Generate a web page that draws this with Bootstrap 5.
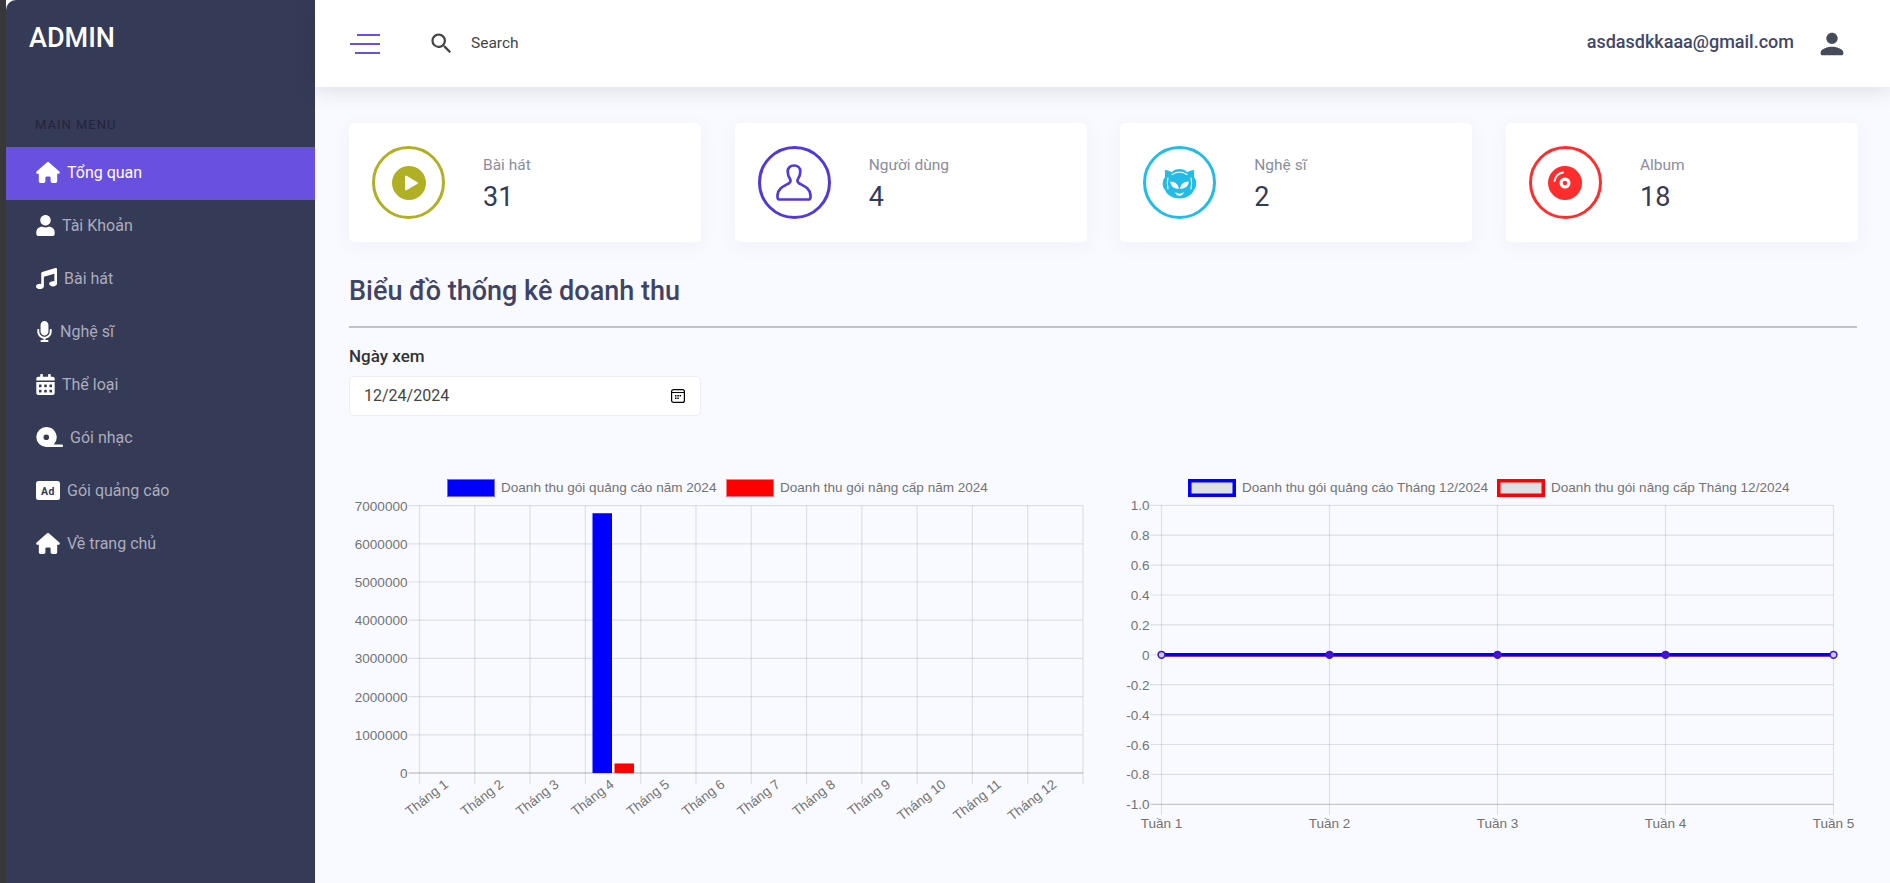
<!DOCTYPE html>
<html lang="en">
<head>
  <meta charset="UTF-8" />
  <meta name="viewport" content="width=device-width, initial-scale=1" />
  <title>Admin</title>
  <link href="https://cdn.jsdelivr.net/npm/bootstrap@5.3.0/dist/css/bootstrap.min.css" rel="stylesheet" />
  <style>
    body { font-family: Roboto, "Liberation Sans", sans-serif; background: #f9faff; color: #333; overflow: hidden; }
    .page-strip { width: 6px; background: #383838; flex: none; }
    .side-panel { width: 309px; flex: none; background: #353a56; border-top-left-radius: 10px; }
    .side-logo { height: 87px; padding: 23px 0 0 23px; color: #fff; font-size: 27px; font-weight: 500; line-height: 30px; }
    .side-title { height: 60px; padding: 30px 0 0 29px; font-size: 13px; line-height: 16px; letter-spacing: 1px; color: #22253a; }
    .side-link { height: 53px; padding: 0 0 2px 30px; gap: 7px; font-size: 16px; color: #abadbd; }
    .side-link svg { fill: #fff; flex: none; }
    .side-link.active-item { background: #6950df; color: #fff; }
    .top-bar { height: 87px; background: #fff; box-shadow: 0 4px 20px rgba(40, 40, 70, .13); padding: 0 41px 0 35px; position: relative; }
    .menu-lines { width: 30px; gap: 7px; margin-right: 48px; }
    .menu-lines span { display: block; height: 2px; background: #6950df; }
    .menu-lines span:nth-child(1) { width: 23px; }
    .menu-lines span:nth-child(2) { width: 30px; }
    .menu-lines span:nth-child(3) { width: 25px; }
    .search-box { border: 0; outline: 0; margin-left: 14px; width: 200px; font-size: 15.5px; color: #444; }
    .search-box::placeholder { color: #444; opacity: 1; }
    .user-mail { font-size: 18px; font-weight: 500; line-height: 22px; margin: 0 21px 3px 0; color: #43476a; }
    .body-area { padding: 36px 33px 0 34px; }
    .stat-row { display: grid; grid-template-columns: repeat(4, 352px); justify-content: space-between; margin-right: -1px; }
    .stat-box { height: 119px; border: 0; border-radius: 5px; padding: 0 23px; box-shadow: 0 4px 20px rgba(70, 70, 140, .05); }
    .stat-ring { width: 73px; height: 73px; border: 3.5px solid; border-radius: 50%; margin-right: 38px; flex: none; }
    .ring-play { border-color: #b1b024; }
    .ring-user { border-color: #5139dc; }
    .ring-artist { border-color: #22bce6; }
    .ring-album { border-color: #ff2d2d; }
    .stat-text { padding-top: 3px; }
    .stat-name { font-size: 15.5px; line-height: 20px; color: #8c8d9c; }
    .stat-num { font-size: 27px; line-height: 34px; margin-top: 5px; color: #353a56; }
    .chart-head { font-size: 27px; font-weight: 500; color: #3f4466; margin: 33px 0 0; line-height: 32px; }
    .chart-rule { height: 2px; background: #bfc0c8; margin: 19px 0 15px; opacity: 1; border: 0; }
    .date-label { font-size: 17px; font-weight: 500; color: #333; line-height: 26px; margin-bottom: 7px; }
    .date-field { width: 352px; height: 40px; border: 1px solid #eceef3; border-radius: 5px; font-size: 16px; color: #444; padding: 0 14px; }
    .date-field::-webkit-calendar-picker-indicator {
      width: 14px; height: 14px; padding: 0; margin-right: 1px;
      background: url("data:image/svg+xml,%3Csvg xmlns='http://www.w3.org/2000/svg' viewBox='0 0 14 14'%3E%3Crect x='.6' y='.6' width='12.800' height='12.800' rx='2' fill='none' stroke='%23000' stroke-width='1.200'/%3E%3Cpath d='M1 3.500h12' stroke='%23000' stroke-width='1.200'/%3E%3Cpath d='M4 6h1.500v1.500H4zM6.300 6h1.500v1.500H6.300zM8.600 6h1.500v1.500H8.600zM4 8.500h1.500V10H4zM6.300 8.500h1.500V10H6.300z'/%3E%3C/svg%3E") no-repeat center / 14px 14px;
    }
    .chart-row { display: grid; grid-template-columns: 750px 750px; column-gap: 8px; margin-top: 54px; }
    .chart-row svg { display: block; }
    .chart-row text { font-family: "Liberation Sans", Arial, sans-serif; font-size: 13.55px; fill: #737373; }
  </style>
</head>
<body>
  <div class="d-flex vh-100">
    <div class="page-strip"></div>

    <!-- Sidebar -->
    <aside class="side-panel">
      <div class="side-logo">ADMIN</div>
      <div class="side-title">MAIN MENU</div>
      <nav class="nav flex-column">
        <a class="nav-link d-flex align-items-center side-link active-item" href="#">
          <svg width="24" height="21" viewBox="0 0 576 512"><path d="M575.8 255.5c0 18-15 32.1-32 32.1h-32l.7 160.2c0 2.7-.2 5.4-.5 8.1V472c0 22.1-17.9 40-40 40H456c-1.100 0-2.200 0-3.300-.1-1.400.1-2.800.1-4.200.1H392c-22.100 0-40-17.900-40-40V384c0-17.700-14.300-32-32-32H256c-17.700 0-32 14.300-32 32v88c0 22.100-17.900 40-40 40H128.100c-1.500 0-3-.1-4.500-.2-1.200.1-2.400.2-3.600.2H104c-22.100 0-40-17.900-40-40V360c0-.9 0-1.900.1-2.800V287.600H32c-18 0-32-14-32-32.100 0-9 3-17 10-24L266.400 8c7-7 15-8 22-8s15 2 21 7L564.800 231.500c8 7 12 15 11 24z"/></svg>
          Tổng quan</a>
        <a class="nav-link d-flex align-items-center side-link" href="#">
          <svg width="19" height="21" viewBox="0 0 448 512"><path d="M224 256c70.7 0 128-57.3 128-128S294.7 0 224 0 96 57.3 96 128s57.3 128 128 128zm89.6 32h-16.7c-22.2 10.2-46.9 16-72.9 16s-50.6-5.8-72.9-16h-16.7C60.2 288 0 348.2 0 422.4V464c0 26.5 21.5 48 48 48h352c26.5 0 48-21.5 48-48v-41.6c0-74.2-60.2-134.4-134.4-134.4z"/></svg>
          Tài Khoản</a>
        <a class="nav-link d-flex align-items-center side-link" href="#">
          <svg width="21" height="21" viewBox="0 0 512 512"><path d="M470.38 1.51L150.41 96A32 32 0 0 0 128 126.51v261.41A139 139 0 0 0 96 384c-53 0-96 28.66-96 64s43 64 96 64 96-28.66 96-64V214.32l256-75v184.61a138.4 138.4 0 0 0-32-3.93c-53 0-96 28.66-96 64s43 64 96 64 96-28.65 96-64V32a32 32 0 0 0-41.62-30.49z"/></svg>
          Bài hát</a>
        <a class="nav-link d-flex align-items-center side-link" href="#">
          <svg width="17" height="21" viewBox="0 0 352 512"><path d="M176 352c53.02 0 96-42.98 96-96V96c0-53.02-42.98-96-96-96S80 42.98 80 96v160c0 53.02 42.98 96 96 96zm160-160h-16c-8.84 0-16 7.16-16 16v48c0 74.8-64.49 134.82-140.79 127.38C96.71 376.89 48 317.11 48 250.3V208c0-8.84-7.16-16-16-16H16c-8.84 0-16 7.16-16 16v40.16c0 89.64 63.97 169.55 152 181.69V464H96c-8.84 0-16 7.16-16 16v16c0 8.84 7.16 16 16 16h160c8.84 0 16-7.16 16-16v-16c0-8.84-7.16-16-16-16h-56v-33.77C285.71 418.47 352 344.9 352 256v-48c0-8.84-7.16-16-16-16z"/></svg>
          Nghệ sĩ</a>
        <a class="nav-link d-flex align-items-center side-link" href="#">
          <svg width="19" height="21" viewBox="0 0 448 512"><path d="M0 464c0 26.5 21.5 48 48 48h352c26.5 0 48-21.5 48-48V192H0v272zm320-196c0-6.6 5.4-12 12-12h40c6.6 0 12 5.4 12 12v40c0 6.6-5.4 12-12 12h-40c-6.6 0-12-5.4-12-12v-40zm0 128c0-6.6 5.4-12 12-12h40c6.6 0 12 5.4 12 12v40c0 6.6-5.4 12-12 12h-40c-6.6 0-12-5.4-12-12v-40zM192 268c0-6.6 5.4-12 12-12h40c6.6 0 12 5.4 12 12v40c0 6.6-5.4 12-12 12h-40c-6.6 0-12-5.4-12-12v-40zm0 128c0-6.6 5.4-12 12-12h40c6.6 0 12 5.4 12 12v40c0 6.6-5.4 12-12 12h-40c-6.6 0-12-5.4-12-12v-40zM64 268c0-6.6 5.4-12 12-12h40c6.6 0 12 5.4 12 12v40c0 6.6-5.4 12-12 12H76c-6.6 0-12-5.4-12-12v-40zm0 128c0-6.6 5.4-12 12-12h40c6.6 0 12 5.4 12 12v40c0 6.6-5.4 12-12 12H76c-6.6 0-12-5.4-12-12v-40zM400 64h-48V16c0-8.8-7.2-16-16-16h-32c-8.8 0-16 7.2-16 16v48H160V16c0-8.8-7.2-16-16-16h-32c-8.8 0-16 7.2-16 16v48H48C21.5 64 0 85.5 0 112v48h448v-48c0-26.5-21.5-48-48-48z"/></svg>
          Thể loại</a>
        <a class="nav-link d-flex align-items-center side-link" href="#">
          <svg width="27" height="21" viewBox="0 0 27 21"><path fill-rule="evenodd" d="M10.300 0a10.300 10.300 0 0 1 7.400 17.500h8.300a1 1 0 0 1 0 2.500H10.300a10 10 0 0 1 0-20zM10.300 7.500a2.800 2.800 0 1 0 0 5.600 2.800 2.800 0 0 0 0-5.600z"/></svg>
          Gói nhạc</a>
        <a class="nav-link d-flex align-items-center side-link" href="#">
          <svg width="24" height="19" viewBox="0 0 24 19"><rect width="24" height="19" rx="2.500"/><text x="12" y="13.500" text-anchor="middle" font-family="Roboto" font-weight="700" font-size="10.500" letter-spacing=".4" fill="#353a56">Ad</text></svg>
          Gói quảng cáo</a>
        <a class="nav-link d-flex align-items-center side-link" href="#">
          <svg width="24" height="21" viewBox="0 0 576 512"><path d="M575.8 255.5c0 18-15 32.1-32 32.1h-32l.7 160.2c0 2.7-.2 5.4-.5 8.1V472c0 22.1-17.9 40-40 40H456c-1.100 0-2.200 0-3.300-.1-1.400.1-2.800.1-4.200.1H392c-22.100 0-40-17.900-40-40V384c0-17.700-14.300-32-32-32H256c-17.700 0-32 14.300-32 32v88c0 22.100-17.900 40-40 40H128.100c-1.500 0-3-.1-4.500-.2-1.200.1-2.400.2-3.600.2H104c-22.100 0-40-17.900-40-40V360c0-.9 0-1.900.1-2.800V287.600H32c-18 0-32-14-32-32.100 0-9 3-17 10-24L266.400 8c7-7 15-8 22-8s15 2 21 7L564.800 231.500c8 7 12 15 11 24z"/></svg>
          Về trang chủ</a>
      </nav>
    </aside>

    <div class="flex-grow-1">
      <!-- Top bar -->
      <header class="top-bar d-flex align-items-center">
        <div class="menu-lines d-flex flex-column align-items-end">
          <span></span><span></span><span></span>
        </div>
        <svg width="27" height="27" viewBox="0 0 24 24" fill="#444"><path d="M15.5 14h-.79l-.28-.27A6.471 6.471 0 0 0 16 9.5 6.5 6.5 0 1 0 9.5 16c1.61 0 3.09-.59 4.23-1.57l.27.28v.79l5 4.99L20.49 19l-4.99-5zm-6 0C7.01 14 5 11.99 5 9.5S7.01 5 9.5 5 14 7.01 14 9.5 11.99 14 9.5 14z"/></svg>
        <input class="search-box" type="text" placeholder="Search" />
        <div class="ms-auto user-mail">asdasdkkaaa@gmail.com</div>
        <svg width="34" height="34" viewBox="0 0 24 24" fill="#464b5a"><path d="M12 12c2.21 0 4-1.79 4-4s-1.79-4-4-4-4 1.79-4 4 1.79 4 4 4zm0 2c-2.67 0-8 1.34-8 4v1a1 1 0 0 0 1 1h14a1 1 0 0 0 1-1v-1c0-2.66-5.33-4-8-4z"/></svg>
      </header>

      <main class="body-area">
        <!-- Stat cards -->
        <div class="stat-row">
          <div class="card stat-box flex-row align-items-center">
            <div class="stat-ring ring-play d-flex align-items-center justify-content-center">
              <svg width="34" height="34" viewBox="0 0 34 34"><circle cx="17" cy="17" r="17" fill="#b1b024"/><path d="M13 10.500v13a1 1 0 0 0 1.500.8l11-6.500a1 1 0 0 0 0-1.600l-11-6.500a1 1 0 0 0-1.500.8z" fill="#fff"/></svg>
            </div>
            <div class="stat-text"><div class="stat-name">Bài hát</div><div class="stat-num">31</div></div>
          </div>
          <div class="card stat-box flex-row align-items-center">
            <div class="stat-ring ring-user d-flex align-items-center justify-content-center">
              <svg width="36" height="37" viewBox="0 0 36 37"><path fill="none" stroke="#5139dc" stroke-width="2.700" stroke-linejoin="round" d="M18 1.500c-4 0-6.300 2.800-6.300 6 0 2.800.9 5.300 2.200 7.300 1.100 1.800.8 3.500-.9 4.400C8 22 2.200 24 1.500 31c-.1 2 0 4.500 1.300 4.500h30.400c1.300 0 1.400-2.500 1.300-4.500C33.800 24 28 22 23 19.200c-1.700-.9-2-2.600-.9-4.400 1.300-2 2.200-4.500 2.200-7.300 0-3.200-2.300-6-6.300-6z"/></svg>
            </div>
            <div class="stat-text"><div class="stat-name">Người dùng</div><div class="stat-num">4</div></div>
          </div>
          <div class="card stat-box flex-row align-items-center">
            <div class="stat-ring ring-artist d-flex align-items-center justify-content-center">
              <svg width="35" height="32" viewBox="-1 0 36 32">
                <path fill="#22bce6" d="M2 2.500C5 2.700 7 3.500 9 5c4-4.500 12-4.500 16 0 2-1.500 4-2.300 7-2.500V10c3 3 3 10 0 13-2 6-9 9-15 9S4 29 2 23c-3-3-3-10 0-13z"/>
                <path fill="none" stroke="#fff" stroke-width="1.100" d="M9 7.500Q17 2 25 7.500M5.200 10.500c-1 4-1 8 0 12M28.800 10.500c1 4 1 8 0 12"/>
                <path fill="#fff" d="M7.500 14.500c5.500 0 8 3 9 7.500-5.500 0-8.500-2.500-9-7.500zM26.500 14.500c-5.500 0-8 3-9 7.500 5.500 0 8.500-2.500 9-7.500zM12.500 25.500q4.500 2 9 0-1 3.500-4.500 3.500t-4.500-3.500z"/>
                <path fill="#22bce6" d="M14.500 25h5l-2.500 2.500z"/>
              </svg>
            </div>
            <div class="stat-text"><div class="stat-name">Nghệ sĩ</div><div class="stat-num">2</div></div>
          </div>
          <div class="card stat-box flex-row align-items-center">
            <div class="stat-ring ring-album d-flex align-items-center justify-content-center">
              <svg width="34" height="34" viewBox="0 0 34 34"><circle cx="17" cy="17" r="17" fill="#ff2d2d"/><circle cx="17" cy="17" r="5.500" fill="#fff"/><circle cx="17" cy="17" r="2.300" fill="#ff2d2d"/><path d="M6.500 15A10.500 10.500 0 0 1 15 6.500" fill="none" stroke="#fff" stroke-width="1.800" stroke-linecap="round"/></svg>
            </div>
            <div class="stat-text"><div class="stat-name">Album</div><div class="stat-num">18</div></div>
          </div>
        </div>

        <h2 class="chart-head">Biểu đồ thống kê doanh thu</h2>
        <hr class="chart-rule" />
        <label class="form-label date-label d-block" for="viewDate">Ngày xem</label>
        <input id="viewDate" class="form-control date-field" type="date" value="2024-12-24" />

        <div class="chart-row">
          <svg id="barChart" width="750" height="370"></svg>
          <svg id="lineChart" width="750" height="370"></svg>
        </div>
      </main>
    </div>
  </div>

  <script>
    // Small helper for building svg nodes
    function add(svg, tag, attrs, text) {
      const el = document.createElementNS("http://www.w3.org/2000/svg", tag);
      for (let key in attrs) el.setAttribute(key, attrs[key]);
      if (text !== undefined) el.textContent = text;
      svg.appendChild(el);
      return el;
    }
    function line(svg, x1, y1, x2, y2, color, width) {
      add(svg, "line", { x1, y1, x2, y2, stroke: color, "stroke-width": width || 1.2 });
    }
    function legend(svg, x, label, stroke, fill, sw) {
      add(svg, "rect", { x: x + sw / 2, y: 9 + sw / 2, width: 48 - sw, height: 18 - sw, fill, stroke, "stroke-width": sw });
      add(svg, "text", { x: x + 54, y: 22 }, label);
    }
    const GRID = "rgba(0,0,0,.1)";

    // Bar chart: revenue by month
    const bar = document.getElementById("barChart");
    const bl = 70.5, br = 734, bt = 35.6, bb = 303;
    legend(bar, 98, "Doanh thu gói quảng cáo năm 2024", "#6a6aff", "#0000ff", 1);
    legend(bar, 377, "Doanh thu gói nâng cấp năm 2024", "#ff7a7a", "#ff0000", 1);
    for (let i = 0; i <= 7; i++) {
      const y = bb - (bb - bt) * i / 7;
      line(bar, bl - 11, y, br, y, i === 0 ? "rgba(0,0,0,.3)" : GRID);
      add(bar, "text", { x: bl - 12, y: y + 5, "text-anchor": "end" }, i * 1000000);
    }
    const cw = (br - bl) / 12;
    for (let i = 0; i <= 12; i++) {
      const x = bl + cw * i;
      line(bar, x, bt, x, bb + 11, GRID);
    }
    for (let i = 0; i < 12; i++) {
      const x = bl + cw * i + cw / 2 + 2;
      add(bar, "text", { x, y: 316, "text-anchor": "end", transform: `rotate(-38 ${x} 316)` }, "Tháng " + (i + 1));
    }
    const toY = v => bb - (bb - bt) * v / 7000000;
    add(bar, "rect", { x: 243.5, y: toY(6800000), width: 19.5, height: bb - toY(6800000), fill: "#0000ff" });
    add(bar, "rect", { x: 265.5, y: toY(250000), width: 19.5, height: bb - toY(250000), fill: "#ff0000" });

    // Line chart: revenue by week
    const chart = document.getElementById("lineChart");
    const ll = 54.5, lr = 726.5, lt = 35.3, lb = 334.3;
    legend(chart, 81, "Doanh thu gói quảng cáo Tháng 12/2024", "#0000ff", "#dfe0e5", 3.5);
    legend(chart, 390, "Doanh thu gói nâng cấp Tháng 12/2024", "#ff0000", "#dfe0e5", 3.5);
    for (let i = 0; i <= 10; i++) {
      const y = lt + (lb - lt) * i / 10;
      const val = 1 - i / 5;
      const label = i === 5 ? "0" : val.toFixed(1);
      line(chart, ll - 11, y, lr, y, i === 10 ? "rgba(0,0,0,.2)" : GRID);
      add(chart, "text", { x: ll - 12, y: y + 5, "text-anchor": "end" }, label);
    }
    const zero = (lt + lb) / 2;
    for (let i = 0; i < 5; i++) {
      const x = ll + (lr - ll) * i / 4;
      line(chart, x, lt, x, lb + 11, GRID);
      add(chart, "text", { x, y: 358, "text-anchor": "middle" }, "Tuần " + (i + 1));
    }
    line(chart, ll, zero, lr, zero, "#ff0000", 3.5);
    line(chart, ll, zero, lr, zero, "#0000ff", 3.5);
    for (let i = 0; i < 5; i++) {
      const x = ll + (lr - ll) * i / 4;
      add(chart, "circle", { cx: x, cy: zero, r: 3.4, fill: i === 0 || i === 4 ? "#c9c6ee" : "#4a10d0", stroke: "#3a14d8", "stroke-width": 1.5 });
    }
  </script>
  <script src="https://cdn.jsdelivr.net/npm/bootstrap@5.3.0/dist/js/bootstrap.bundle.min.js"></script>
</body>
</html>
